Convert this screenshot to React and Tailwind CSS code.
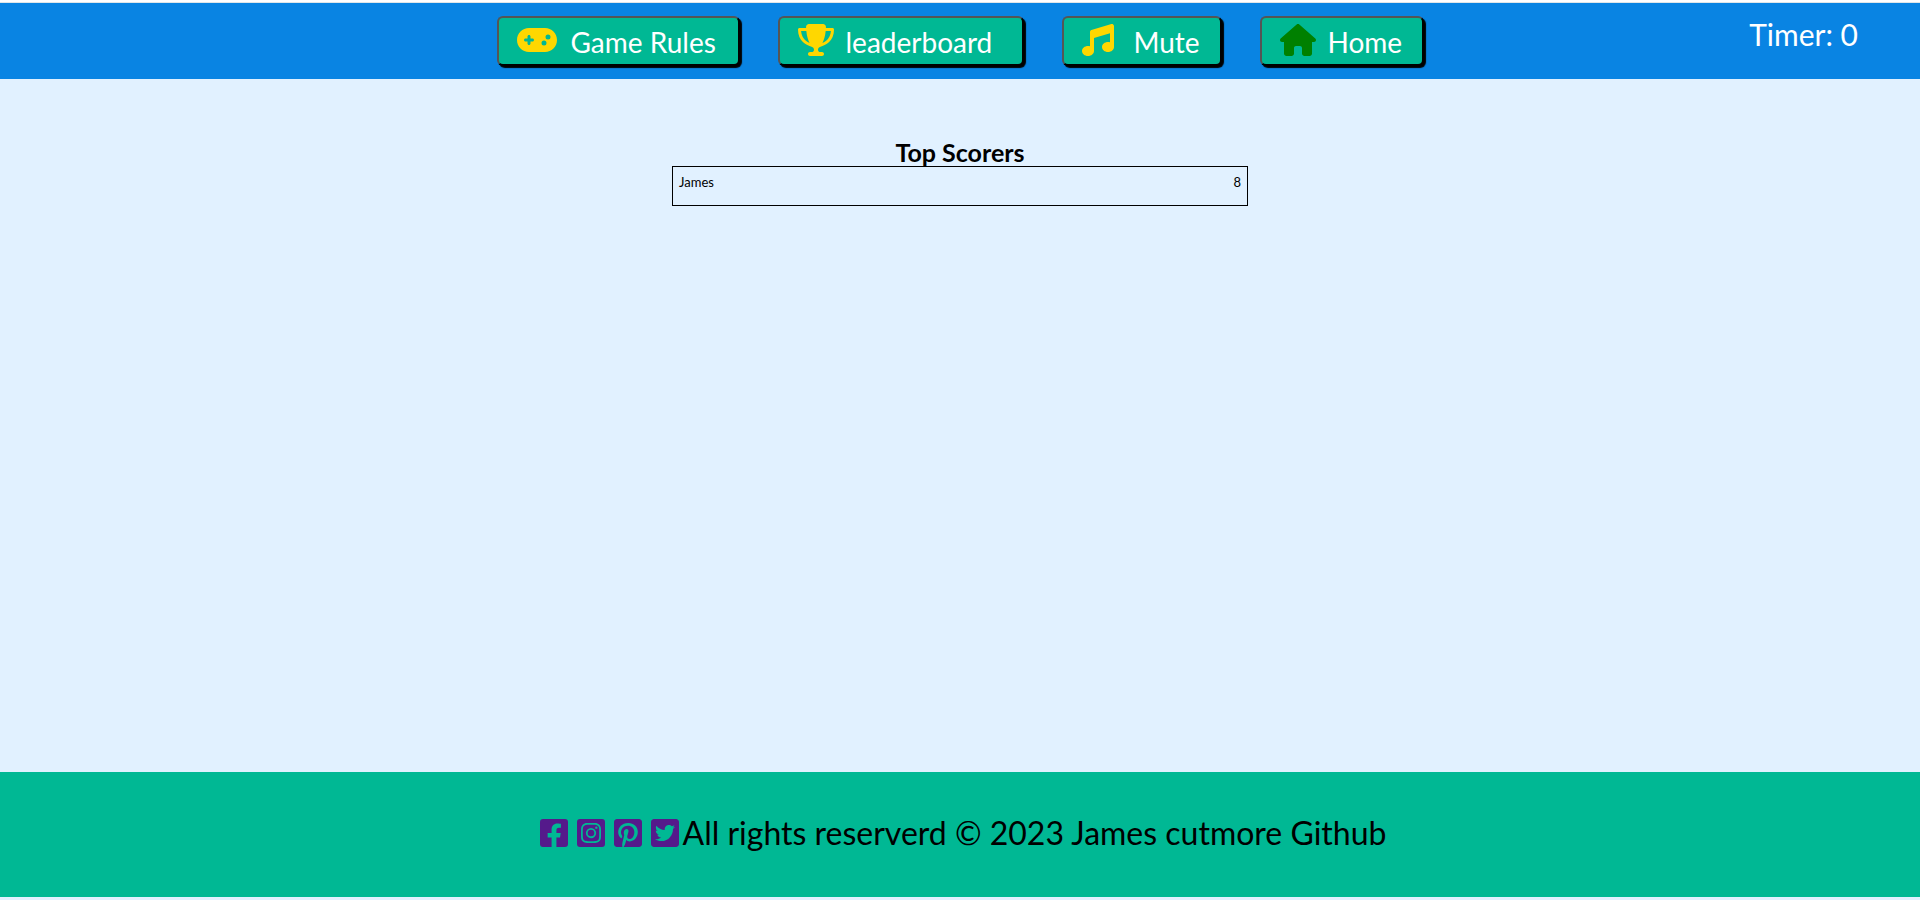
import { FaGamepad, FaTrophy, FaMusic, FaHouse } from "react-icons/fa6";
import {
  FaFacebookSquare,
  FaInstagramSquare,
  FaPinterestSquare,
  FaTwitterSquare,
} from "react-icons/fa";

const navItems = [
  { label: "Game Rules", Icon: FaGamepad, icon: "h-8 w-10 text-[#ffd700]", box: "w-[243px] gap-3.5" },
  { label: "leaderboard", Icon: FaTrophy, icon: "h-8 w-9 text-[#ffd700]", box: "w-[246px] gap-3" },
  { label: "Mute", Icon: FaMusic, icon: "h-8 w-8 text-[#ffd700]", box: "w-[160px] gap-5" },
  { label: "Home", Icon: FaHouse, icon: "h-8 w-9 text-[#008000]", box: "w-[164px] gap-3" },
];

const socials = [
  { label: "Facebook", Icon: FaFacebookSquare },
  { label: "Instagram", Icon: FaInstagramSquare },
  { label: "Pinterest", Icon: FaPinterestSquare },
  { label: "Twitter", Icon: FaTwitterSquare },
];

const scores = [{ name: "James", score: 8 }];

function NavButton({ label, Icon, icon, box }) {
  return (
    <button
      type="button"
      className={`flex h-[50px] shrink-0 items-center rounded-md border-2 border-t-[#555] border-l-[#555] border-r-black border-b-black bg-[#00b894] pb-0.5 pl-[18px] text-[28px] leading-8 whitespace-nowrap text-white shadow-[2px_2px_1px_#000] ${box}`}
    >
      <Icon className={`shrink-0 ${icon}`} aria-hidden="true" />
      <span className="pt-1">{label}</span>
    </button>
  );
}

export default function App() {
  return (
    <div className="flex min-h-screen flex-col bg-[#e1f1ff] font-['Lato',sans-serif] text-black">
      <header className="border-t-2 border-white bg-[#0984e3]">
        <div className="grid grid-cols-[1fr_auto_1fr] items-start border-t border-[#dfe6e9] py-[13px]">
          <nav className="col-start-2 flex gap-[38px]" aria-label="Main">
            {navItems.map((item) => (
              <NavButton key={item.label} {...item} />
            ))}
          </nav>
          <p className="mt-0.5 justify-self-end pr-[62px] text-[30px] leading-8 text-white">Timer: 0</p>
        </div>
      </header>

      <main className="flex grow flex-col items-center pt-[59px]">
        <h1 className="text-[25px] leading-7 font-bold">Top Scorers</h1>
        <table className="h-10 w-[30%] border border-black text-[13px]" aria-label="Top Scorers">
          <tbody>
            {scores.map(({ name, score }) => (
              <tr key={name} className="align-top">
                <td className="px-1.5 pt-[7px] leading-4">{name}</td>
                <td className="px-1.5 pt-[7px] text-right leading-4">{score}</td>
              </tr>
            ))}
          </tbody>
        </table>
      </main>

      <footer className="mb-[3px] flex h-[125px] items-center justify-center bg-[#00b894] pb-1 pl-1.5">
        <div className="flex gap-[9px]">
          {socials.map(({ label, Icon }) => (
            <a key={label} href="#" aria-label={label} className="text-[#551a8b]">
              <Icon className="h-8 w-7" />
            </a>
          ))}
        </div>
        <p className="pl-1 text-[32px] leading-8">All rights reserverd © 2023 James cutmore Github</p>
      </footer>
    </div>
  );
}
